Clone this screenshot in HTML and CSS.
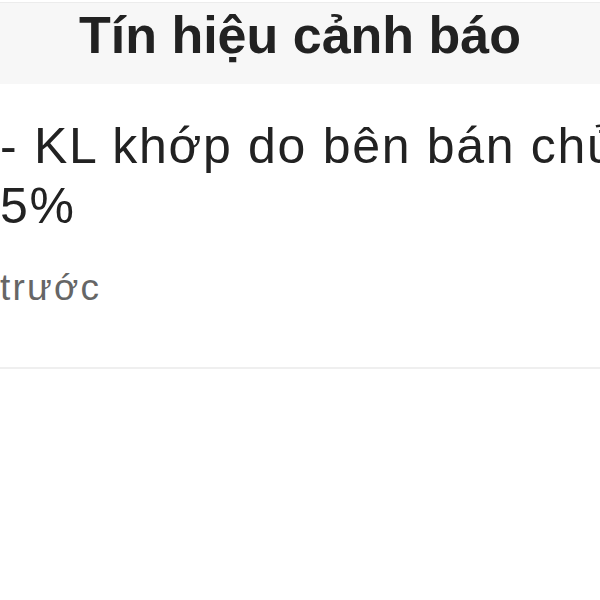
FILE: index.html
```html
<!DOCTYPE html>
<html lang="vi">
<head>
  <meta charset="UTF-8" />
  <meta name="viewport" content="width=device-width, initial-scale=1.0" />
  <title>Tín hiệu cảnh báo</title>
  <link rel="stylesheet" href="styles.css">
</head>
<body>
  <div class="header">
    <h1>Tín hiệu cảnh báo</h1>
  </div>

  <div class="signal">
    <div class="signal-text">
      <span class="line">- KL khớp do bên bán chủ</span>
      <span class="line">5%</span>
    </div>
    <div class="signal-time">trước</div>
  </div>
</body>
</html>
```

FILE: styles.css
```css
body {
  font-family: 'Liberation Sans', Arial, sans-serif;
  background-color: #ffffff;
  color: #222222;
  margin: 0;
  overflow: hidden;
}
.header {
  box-sizing: border-box;
  height: 82px;
  margin-top: 2px;
  padding-top: 6px;
  border-top: 1px solid #ececec;
  background-color: #f7f7f7;
  text-align: center;
}
.header h1 {
  margin: 0;
  font-size: 52px;
  font-weight: bold;
  color: #222222;
  line-height: 52px;
}
.signal {
  padding: 32px 0 57px 0;
  border-bottom: 2px solid #efefef;
}
.signal-text {
  font-size: 50px;
  line-height: 60px;
  letter-spacing: 1.7px;
  white-space: nowrap;
}
.line {
  display: block;
}
.signal-time {
  margin-top: 30px;
  font-size: 37px;
  line-height: 44px;
  letter-spacing: 2.2px;
  color: #666666;
}
```
